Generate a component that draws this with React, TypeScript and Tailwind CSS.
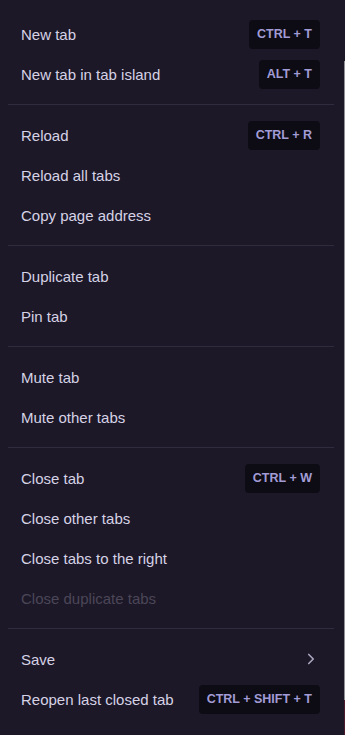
import React from "react";

type Item = { label: string; shortcut?: string; disabled?: boolean; submenu?: boolean };

const groups: Item[][] = [
  [
    { label: "New tab", shortcut: "CTRL + T" },
    { label: "New tab in tab island", shortcut: "ALT + T" },
  ],
  [
    { label: "Reload", shortcut: "CTRL + R" },
    { label: "Reload all tabs" },
    { label: "Copy page address" },
  ],
  [{ label: "Duplicate tab" }, { label: "Pin tab" }],
  [{ label: "Mute tab" }, { label: "Mute other tabs" }],
  [
    { label: "Close tab", shortcut: "CTRL + W" },
    { label: "Close other tabs" },
    { label: "Close tabs to the right" },
    { label: "Close duplicate tabs", disabled: true },
  ],
  [{ label: "Save", submenu: true }, { label: "Reopen last closed tab", shortcut: "CTRL + SHIFT + T" }],
];

function Row({ item }: { item: Item }) {
  return (
    <div className="flex h-10 items-center justify-between pl-[13px] pr-[14px]">
      <span
        className={
          "text-[15px] leading-none " + (item.disabled ? "text-[#4b4658]" : "text-[#d6d2e6]")
        }
      >
        {item.label}
      </span>
      {item.shortcut && (
        <span className="flex h-[29px] items-center rounded-[4px] bg-[#0d0b13] px-2 text-[12.5px] font-bold leading-none text-[#a29cd6]">
          {item.shortcut}
        </span>
      )}
      {item.submenu && (
        <svg width="18" height="18" viewBox="0 0 24 24" fill="none" stroke="#aaa6bf" strokeWidth="2.2" strokeLinecap="round" strokeLinejoin="round">
          <path d="m9 18 6-6-6-6" />
        </svg>
      )}
    </div>
  );
}

export default function App() {
  return (
    <div
      className="relative min-h-[735px] w-full bg-[#1c1827] pt-[14px]"
      style={{ fontFamily: '"Liberation Sans", Arial, sans-serif' }}
    >
      <div className="w-[334px] pl-2">
        {groups.map((g, gi) => (
          <div key={gi}>
            {gi > 0 && <div className="my-2.5 h-px bg-[#302b3e]" />}
            {g.map((it) => (
              <Row key={it.label} item={it} />
            ))}
          </div>
        ))}
      </div>
      <div className="absolute right-0 top-[61px] h-[639px] w-px bg-[#8f8f95]" />
      <div className="absolute right-0 top-[700px] h-[35px] w-px bg-[#4a1a2c]" />
    </div>
  );
}
